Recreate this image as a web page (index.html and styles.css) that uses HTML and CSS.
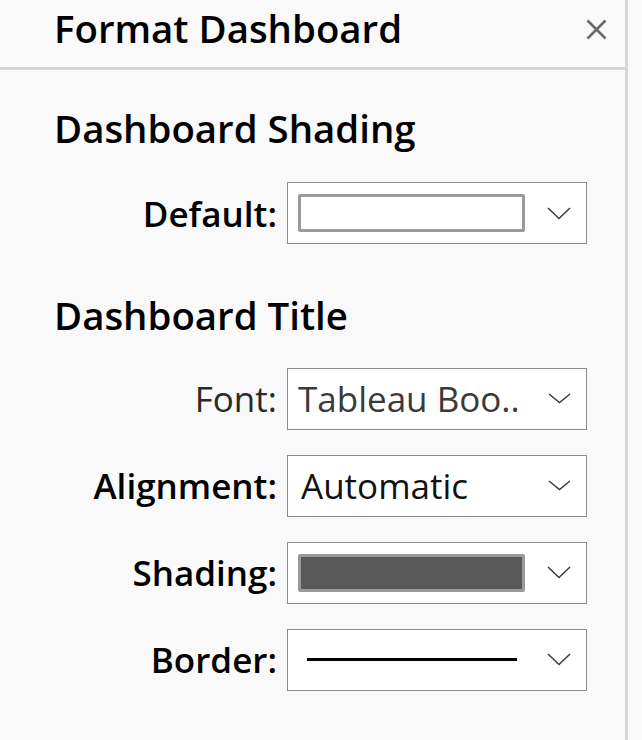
FILE: index.html
```html
<!DOCTYPE html>
<html>
<head>
<meta charset="utf-8">
<link rel="stylesheet" href="styles.css">
</head>
<body>
<div class="panel">
  <header class="panel-header">
    <h1 class="panel-title">Format Dashboard</h1>
    <span class="close" aria-label="Close">
      <svg width="21" height="21" viewBox="0 0 21 21"><path d="M1.5 1.5 L19.5 19.5 M19.5 1.5 L1.5 19.5" stroke="#6b6b6b" stroke-width="2.6" fill="none"/></svg>
    </span>
  </header>
  <section class="section section-first">
    <h2 class="section-title">Dashboard Shading</h2>
    <div class="rows">
      <label class="label">Default:</label>
      <div class="select">
        <span class="swatch swatch-white"></span>
        <svg class="chev" width="24" height="13" viewBox="0 0 24 13"><path d="M1 1 L12 11.5 L23 1" stroke="#3a3a3a" stroke-width="1.5" fill="none"/></svg>
      </div>
    </div>
  </section>
  <section class="section">
    <h2 class="section-title">Dashboard Title</h2>
    <div class="rows">
      <label class="label label-normal">Font:</label>
      <div class="select">
        <span class="value value-muted">Tableau Boo..</span>
        <svg class="chev" width="23" height="11" viewBox="0 0 23 11"><path d="M1 1 L11.5 9.5 L22 1" stroke="#3a3a3a" stroke-width="1.4" fill="none"/></svg>
      </div>
      <label class="label">Alignment:</label>
      <div class="select">
        <span class="value">Automatic</span>
        <svg class="chev" width="23" height="11" viewBox="0 0 23 11"><path d="M1 1 L11.5 9.5 L22 1" stroke="#3a3a3a" stroke-width="1.4" fill="none"/></svg>
      </div>
      <label class="label">Shading:</label>
      <div class="select">
        <span class="swatch swatch-dark"></span>
        <svg class="chev" width="24" height="13" viewBox="0 0 24 13"><path d="M1 1 L12 11.5 L23 1" stroke="#3a3a3a" stroke-width="1.5" fill="none"/></svg>
      </div>
      <label class="label">Border:</label>
      <div class="select">
        <span class="line"></span>
        <svg class="chev" width="24" height="13" viewBox="0 0 24 13"><path d="M1 1 L12 11.5 L23 1" stroke="#3a3a3a" stroke-width="1.5" fill="none"/></svg>
      </div>
    </div>
  </section>
</div>
</body>
</html>
```
FILE: styles.css
```css
html, body {
  margin: 0;
  padding: 0;
  background: #f9f9f9;
}
body {
  font-family: "Open Sans", "Liberation Sans", sans-serif;
  color: #000;
  width: 642px;
  height: 740px;
  overflow: hidden;
}
.panel {
  width: 625px;
  height: 740px;
  border-right: 3px solid #d6d6d6;
}
.panel-header {
  height: 67px;
  border-bottom: 3px solid #d6d6d6;
  display: flex;
  align-items: flex-start;
  justify-content: space-between;
  padding: 0 18px 0 54px;
}
.panel-title {
  margin: 0;
  padding-top: 9px;
  font-size: 38.4px;
  font-weight: 600;
  line-height: 1;
}
.close {
  display: flex;
  padding-top: 19px;
}
.section {
  padding-left: 54px;
}
.section-title {
  margin: 0;
  font-size: 38.4px;
  font-weight: 600;
  line-height: 1;
  padding-top: 52px;
  padding-bottom: 33px;
}
.section-first .section-title {
  padding-top: 39px;
  padding-bottom: 35px;
}
.rows {
  display: grid;
  grid-template-columns: 223px 300px;
  column-gap: 10px;
  row-gap: 25px;
  align-items: center;
}
.label {
  text-align: right;
  font-size: 35px;
  font-weight: 600;
  white-space: nowrap;
  line-height: 1;
}
.label-normal {
  font-weight: 400;
  color: #2a2a2a;
}
.select {
  height: 62px;
  box-sizing: border-box;
  border: 1.5px solid #8a8a8a;
  background: #fff;
  display: flex;
  align-items: center;
  padding: 0 15px 0 10px;
  justify-content: space-between;
}
.swatch {
  width: 227px;
  height: 38px;
  box-sizing: border-box;
  border: 3px solid #9a9a9a;
  border-radius: 2px;
}
.swatch-white { background: #fff; }
.swatch-dark { background: #595959; }
.value {
  font-size: 35px;
  line-height: 1;
  color: #111;
  padding-left: 3px;
}
.value-muted {
  color: #3a3a3a;
  padding-left: 0;
}
.line {
  width: 210px;
  height: 3px;
  background: #000;
  margin-left: 9px;
}
.chev {
  display: block;
}
```
